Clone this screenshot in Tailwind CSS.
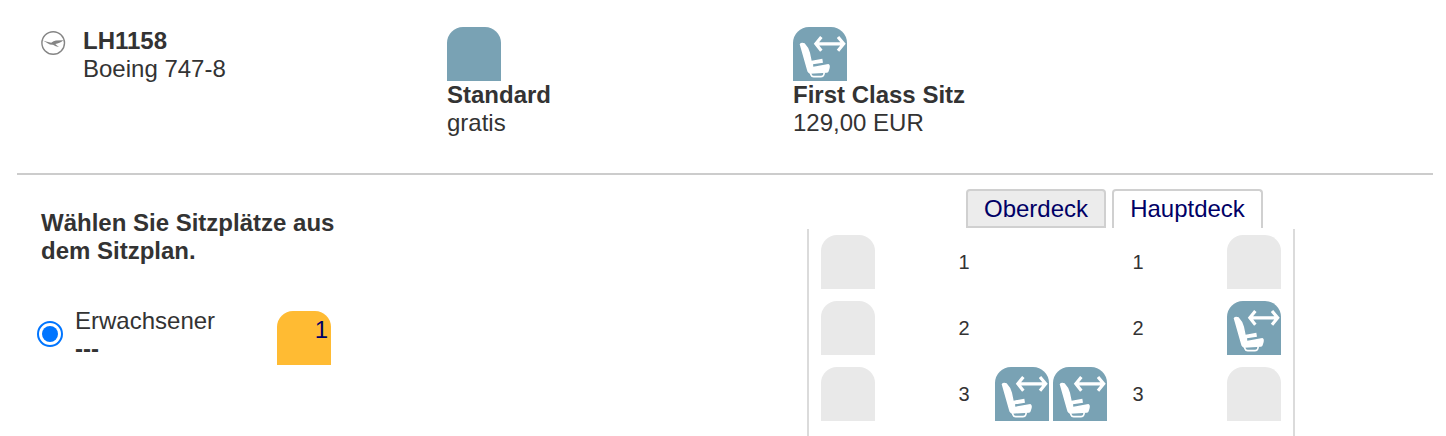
<!DOCTYPE html>
<html lang="de">
<head>
    <meta charset="UTF-8">
    <meta name="viewport" content="width=device-width, initial-scale=1.0">
    <title>Sitzplatzreservierung</title>
    <script src="https://cdn.jsdelivr.net/npm/@tailwindcss/browser@4"></script>
</head>
<body class="bg-white h-[436px] overflow-hidden font-['Liberation_Sans',Arial,sans-serif] text-[24px] leading-[28px] text-[#333]">

    <!-- Seat icon shared by the legend and the seat map -->
    <svg class="hidden">
        <symbol id="firstSeat" viewBox="24 21 162 162">
            <path fill="#fff" d="M44 73Q48 66 59 70Q72 84 75 98L80 122L112 116L114 128L84 133L85 140L130 132Q136 134 134 144L131 154Q130 158 126 158L76 161Q68 160 66 150Z"/>
            <path fill="none" stroke="#fff" stroke-width="5" d="M76 158L78 164Q80 170 86 170H108Q114 170 116 165L118 157"/>
            <path fill="none" stroke="#fff" stroke-width="9.500" d="M93 71.500H176M109 51L92.500 71.500L109 92M159 51L176 71.500L159 92"/>
        </symbol>
    </svg>

    <!-- Flight and legend -->
    <header class="ml-[17px] mr-[13px] h-[175px] pt-[27px] pl-6 border-b-2 border-[#ccc] flex">
        <div class="w-[406px] flex items-start">
            <svg class="w-[25px] h-[25px] mt-[3px] mr-[17px]" viewBox="0 0 25 25">
                <circle cx="12.200" cy="13" r="11.300" fill="none" stroke="#858585" stroke-width="1.400"/>
                <path fill="#858585" d="M1.800 10.600Q6 11.800 10.200 12.700Q12.500 10.800 15 10.500L22.300 10.200L20.500 11.700L18.500 12.800Q16.500 13.900 14.300 14Q15.800 15.600 18 17Q14.500 16.500 12 14.800Q9 15 7 13.600Q4 11.500 1.800 10.600Z"/>
            </svg>
            <div>
                <h1 class="font-bold">LH1158</h1>
                <p>Boeing 747-8</p>
            </div>
        </div>
        <div class="w-[346px]">
            <div class="size-[54px] rounded-t-2xl bg-[#79a2b4]"></div>
            <h2 class="font-bold">Standard</h2>
            <p>gratis</p>
        </div>
        <div>
            <svg class="size-[54px] rounded-t-2xl bg-[#79a2b4]"><use href="#firstSeat"/></svg>
            <h2 class="font-bold">First Class Sitz</h2>
            <p>129,00 EUR</p>
        </div>
    </header>

    <main class="flex">
        <!-- Passenger list -->
        <section class="w-[807px] pt-[34px] pl-[41px]">
            <h2 class="w-[310px] font-bold">Wählen Sie Sitzplätze aus dem Sitzplan.</h2>
            <div class="mt-[42px] -ml-1 flex items-start">
                <svg class="w-[26px] h-[26px] mt-[14px]" viewBox="0 0 26 26">
                    <circle cx="13" cy="13" r="12" fill="none" stroke="#0075ff" stroke-width="2"/>
                    <circle cx="13" cy="13" r="8" fill="#0075ff"/>
                </svg>
                <div class="ml-3 w-[202px]">
                    <p>Erwachsener</p>
                    <p class="font-bold">---</p>
                </div>
                <div class="size-[54px] mt-1 pt-[5px] pr-[3px] rounded-t-2xl bg-[#ffbb33] text-right text-[#000066]">1</div>
            </div>
        </section>

        <!-- Deck tabs and seat map -->
        <section class="w-[488px] pt-[14px]">
            <nav class="ml-[159px] h-[40px] flex items-start gap-[6px] text-[#000066]">
                <a class="w-[140px] h-[39px] pt-1 text-center bg-[#ececec] border-2 border-[#d0d0d0] rounded-t-[4px]">Oberdeck</a>
                <a class="w-[151px] h-[39px] pt-1 text-center border-2 border-b-0 border-[#d0d0d0] rounded-t-[4px]">Hauptdeck</a>
            </nav>
            <div class="h-[207px] pt-[6px] pl-3 border-x-2 border-[#dbdbdb] grid grid-cols-[repeat(8,54px)] auto-rows-[54px] gap-x-1 gap-y-3 content-start text-[20px] text-center leading-[54px]">
                <div class="rounded-t-2xl bg-[#e9e9e9]"></div>
                <div class="col-start-3">1</div>
                <div class="col-start-6">1</div>
                <div class="col-start-8 rounded-t-2xl bg-[#e9e9e9]"></div>

                <div class="col-start-1 rounded-t-2xl bg-[#e9e9e9]"></div>
                <div class="col-start-3">2</div>
                <div class="col-start-6">2</div>
                <svg class="col-start-8 size-[54px] rounded-t-2xl bg-[#79a2b4]"><use href="#firstSeat"/></svg>

                <div class="col-start-1 rounded-t-2xl bg-[#e9e9e9]"></div>
                <div class="col-start-3">3</div>
                <svg class="size-[54px] rounded-t-2xl bg-[#79a2b4]"><use href="#firstSeat"/></svg>
                <svg class="size-[54px] rounded-t-2xl bg-[#79a2b4]"><use href="#firstSeat"/></svg>
                <div class="col-start-6">3</div>
                <div class="col-start-8 rounded-t-2xl bg-[#e9e9e9]"></div>
            </div>
        </section>
    </main>

</body>
</html>
